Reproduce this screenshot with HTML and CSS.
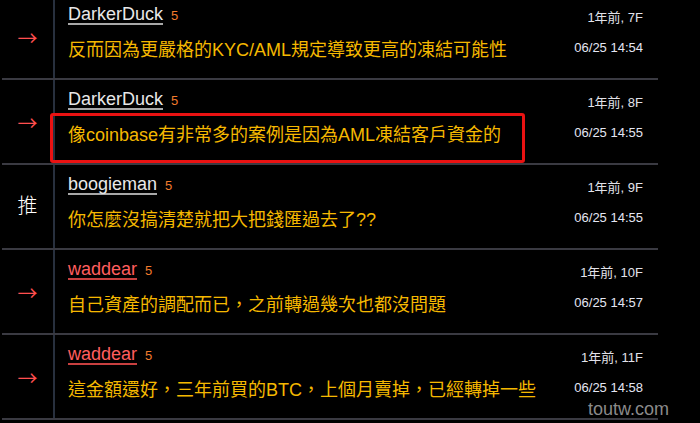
FILE: index.html
```html
<!DOCTYPE html>
<html lang="zh-Hant">
<head>
    <meta charset="UTF-8">
    <meta name="viewport" content="width=device-width, initial-scale=1.0">
    <title>推文</title>
    <link rel="stylesheet" href="styles.css">
</head>
<body>
    <div class="push-list">
        <div class="push">
            <div class="tag arrow">→</div>
            <div class="body">
                <div class="main">
                    <div class="who"><span class="user">DarkerDuck</span><span class="score">5</span></div>
                    <div class="text">反而因為更嚴格的KYC/AML規定導致更高的凍結可能性</div>
                </div>
                <div class="meta">
                    <div class="ago">1年前, 7F</div>
                    <div class="time">06/25 14:54</div>
                </div>
            </div>
        </div>
        <div class="push">
            <div class="tag arrow">→</div>
            <div class="body">
                <div class="main">
                    <div class="who"><span class="user">DarkerDuck</span><span class="score">5</span></div>
                    <div class="text">像coinbase有非常多的案例是因為AML凍結客戶資金的</div>
                </div>
                <div class="meta">
                    <div class="ago">1年前, 8F</div>
                    <div class="time">06/25 14:55</div>
                </div>
            </div>
            <div class="mark"></div>
        </div>
        <div class="push">
            <div class="tag good">推</div>
            <div class="body">
                <div class="main">
                    <div class="who"><span class="user">boogieman</span><span class="score">5</span></div>
                    <div class="text">你怎麼沒搞清楚就把大把錢匯過去了??</div>
                </div>
                <div class="meta">
                    <div class="ago">1年前, 9F</div>
                    <div class="time">06/25 14:55</div>
                </div>
            </div>
        </div>
        <div class="push">
            <div class="tag arrow">→</div>
            <div class="body">
                <div class="main">
                    <div class="who"><span class="user op">waddear</span><span class="score">5</span></div>
                    <div class="text">自己資產的調配而已，之前轉過幾次也都沒問題</div>
                </div>
                <div class="meta">
                    <div class="ago">1年前, 10F</div>
                    <div class="time">06/25 14:57</div>
                </div>
            </div>
        </div>
        <div class="push">
            <div class="tag arrow">→</div>
            <div class="body">
                <div class="main">
                    <div class="who"><span class="user op">waddear</span><span class="score">5</span></div>
                    <div class="text">這金額還好，三年前買的BTC，上個月賣掉，已經轉掉一些</div>
                </div>
                <div class="meta">
                    <div class="ago">1年前, 11F</div>
                    <div class="time">06/25 14:58</div>
                </div>
            </div>
        </div>
    </div>
    <div class="watermark">toutw.com</div>
</body>
</html>
```

FILE: styles.css
```css
body {margin: 0; background: #000; font-family: "Liberation Sans", Arial, "Noto Sans CJK TC", sans-serif; overflow: hidden; height: 423px; position: relative;}
.push-list {margin-top: -5px; padding-left: 2px; width: 656px;}
.push {display: flex; height: 83px; border-bottom: 2px solid #3a3a42; position: relative;}
.tag {width: 51px; flex: none; text-align: center; font-size: 20px; line-height: 24px; padding-top: 31px; font-family: "Noto Sans CJK TC", sans-serif;}
.arrow {color: #ff4f4f;}
.good {color: #fff; padding-top: 28px; font-weight: 300;}
.body {flex: 1; display: flex; border-left: 2px solid #28303e; padding: 0 15px 0 13px;}
.main {flex: 1;}
.who {margin-top: 10px; line-height: 18px; height: 20px;}
.user {display: inline-block; font-size: 18px; color: #e8e8e8; border-bottom: 2px solid #a8a8a8;}
.user.op {color: #ff5e5e; border-bottom-color: #c84040;}
.score {font-size: 13px; color: #f27b2c; margin-left: 8px;}
.text {margin-top: 13px; font-size: 18px; line-height: 24px; color: #f5b800; white-space: nowrap;}
.meta {flex: none; text-align: right; font-size: 13px; line-height: 16px; color: #e2e2ea; padding-top: 15px;}
.time {margin-top: 14px; color: #e4e6f4;}
.mark {position: absolute; left: 48px; top: 33px; width: 469px; height: 44px; border: 3px solid #ea1212; border-radius: 3px;}
.watermark {position: absolute; left: 588px; top: 399px; font-size: 18px; line-height: 20px; color: #8a8a8a;}
```
